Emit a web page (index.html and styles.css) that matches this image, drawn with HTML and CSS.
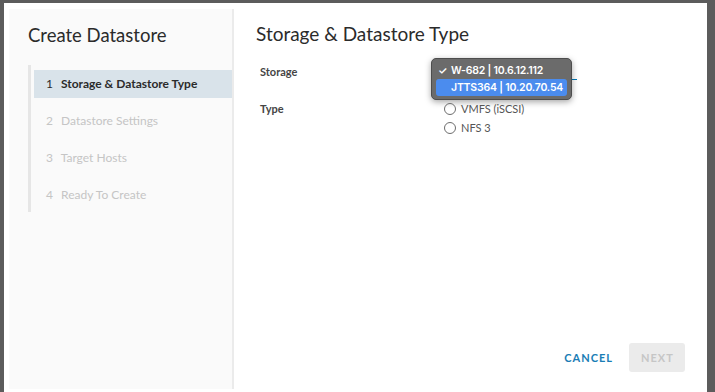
FILE: index.html
```html
<!DOCTYPE html>
<html lang="en">
<head>
  <meta charset="UTF-8">
  <title>Create Datastore</title>
  <link rel="stylesheet" href="styles.css">
</head>
<body>

  <div class="modal">
    <div class="sidebar">
      <h2 class="wizard-title">Create Datastore</h2>
      <ul class="steps">
        <li class="step active"><span class="num">1</span> Storage &amp; Datastore Type</li>
        <li class="step"><span class="num">2</span> Datastore Settings</li>
        <li class="step"><span class="num">3</span> Target Hosts</li>
        <li class="step"><span class="num">4</span> Ready To Create</li>
      </ul>
    </div>

    <div class="content">
      <h3 class="page-title">Storage &amp; Datastore Type</h3>

      <div class="form">
        <div class="form-row">
          <label class="form-label">Storage</label>
          <div class="form-control">
            <div class="select-line"></div>
            <div class="popup">
              <div class="popup-item"><span class="check">✓</span>W-682 | 10.6.12.112</div>
              <div class="popup-item selected">JTTS364 | 10.20.70.54</div>
            </div>
          </div>
        </div>

        <div class="form-row type-row">
          <label class="form-label">Type</label>
          <div class="form-control radios">
            <label class="radio"><span class="circle"></span>VMFS (iSCSI)</label>
            <label class="radio"><span class="circle"></span>NFS 3</label>
          </div>
        </div>
      </div>

      <div class="footer">
        <button class="btn btn-link">CANCEL</button>
        <button class="btn btn-disabled">NEXT</button>
      </div>
    </div>
  </div>

</body>
</html>
```

FILE: styles.css
```css
body {
  margin: 0;
  background-color: #5c5c5c;
  font-family: Lato, "Open Sans", sans-serif;
  color: #313131;
  height: 392px;
  overflow: hidden;
}
.modal {
  margin: 3px 8px 0 4px;
  height: 389px;
  background: #fff;
  padding: 6px 0 0 5px;
  box-sizing: border-box;
  display: flex;
}
.sidebar {
  width: 225px;
  height: 380px;
  background: #fafafa;
  border-right: 2px solid #ebebeb;
  padding-top: 14px;
  box-sizing: border-box;
}
.wizard-title {
  margin: 0 0 18px 19px;
  font-size: 18.5px;
  font-weight: 400;
  line-height: 24px;
  color: #2b2b2b;
}
.steps {
  list-style: none;
  margin: 0 0 0 19px;
  padding: 5px 0 0 0;
  border-left: 3px solid #e6e6e6;
  height: 147px;
  box-sizing: border-box;
}
.step {
  height: 28px;
  line-height: 28px;
  margin: 0 0 9px 3px;
  padding-left: 12px;
  font-size: 12px;
  color: #c5c5c5;
}
.step .num {
  display: inline-block;
  width: 12px;
}
.step.active {
  background: #d9e3ea;
  color: #2b2b2b;
  font-weight: 700;
}
.step.active .num {
  font-weight: 400;
}
.content {
  flex: 1;
  position: relative;
  padding: 14px 22px 0 22px;
  height: 383px;
  box-sizing: border-box;
  display: flex;
  flex-direction: column;
}
.page-title {
  margin: 0;
  font-size: 19px;
  font-weight: 400;
  line-height: 22px;
  color: #2b2b2b;
}
.form {
  margin-top: 17px;
  padding-left: 4px;
}
.form-row {
  display: flex;
  height: 18px;
  align-items: center;
}
.type-row {
  margin-top: 22px;
  align-items: flex-start;
}
.form-label {
  width: 178px;
  font-size: 11px;
  font-weight: 700;
  color: #454545;
}
.form-control {
  position: relative;
  flex: 1;
}
.select-line {
  position: absolute;
  left: 2px;
  top: 8px;
  width: 137px;
  height: 1px;
  background: #0079b8;
}
.popup {
  position: absolute;
  left: -7px;
  top: -13px;
  width: 131px;
  padding: 3px 4px;
  background: #6b6b6b;
  border: 1px solid #4d4d4d;
  border-radius: 5px;
  box-shadow: 0 2px 6px rgba(0, 0, 0, 0.35);
  font-family: Inter, "Noto Sans", sans-serif;
}
.popup-item {
  height: 17px;
  line-height: 17px;
  padding-left: 15px;
  position: relative;
  font-size: 10.5px;
  font-weight: 600;
  letter-spacing: -0.2px;
  color: #fff;
  border-radius: 3px;
  white-space: nowrap;
}
.popup-item .check {
  position: absolute;
  left: 2px;
}
.popup-item.selected {
  background: #4b8cee;
}
.radios {
  display: flex;
  flex-direction: column;
  gap: 6px;
  margin-top: 0;
}
.radio {
  display: flex;
  align-items: center;
  height: 13px;
  font-size: 11px;
  color: #555;
  padding-left: 6px;
}
.circle {
  width: 10px;
  height: 10px;
  border: 1px solid #6d6d6d;
  border-radius: 50%;
  margin-right: 5px;
}
.footer {
  margin-top: auto;
  margin-bottom: 20px;
  display: flex;
  justify-content: flex-end;
  align-items: center;
  gap: 16px;
}
.btn {
  font-family: Lato, "Open Sans", sans-serif;
  font-size: 11px;
  font-weight: 700;
  letter-spacing: 1px;
  border: none;
  border-radius: 3px;
  height: 29px;
  padding: 0 12px;
}
.btn-link {
  background: none;
  color: #1a7db5;
  padding: 0;
}
.btn-disabled {
  background: #ebebeb;
  color: #c6c6c6;
  width: 56px;
}
```
